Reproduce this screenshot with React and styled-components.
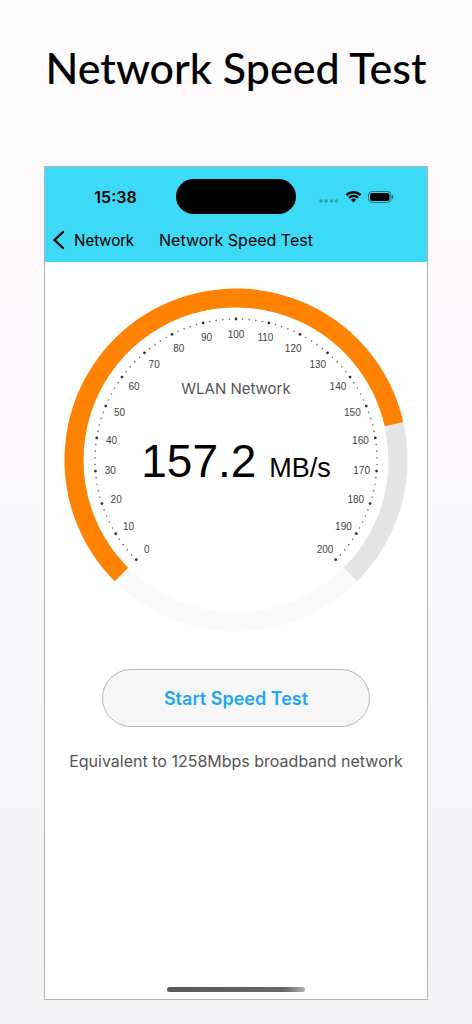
import React from 'react'
import styled, { createGlobalStyle } from 'styled-components';

const MAX_SPEED = 200;
const SWEEP = 270;
const CENTER = 172;
const RING_RADIUS = 162;
const TICK_RADIUS = 141;
const LABEL_RADIUS = 126;

// 0 degrees points up, angles grow clockwise
const polar = (radius, degrees) => {
  const radians = degrees * Math.PI / 180;
  return [CENTER + radius * Math.sin(radians), CENTER - radius * Math.cos(radians)];
};

const angleOf = (speed) => speed / MAX_SPEED * SWEEP - SWEEP / 2;

const arc = (from, to) => {
  const [x1, y1] = polar(RING_RADIUS, from);
  const [x2, y2] = polar(RING_RADIUS, to);
  const large = to - from > 180 ? 1 : 0;
  return `M${ x1 } ${ y1 }A${ RING_RADIUS } ${ RING_RADIUS } 0 ${ large } 1 ${ x2 } ${ y2 }`;
};

const ticks = Array.from({ length: 101 }, (_, i) => i * 2);
const labels = Array.from({ length: 21 }, (_, i) => i * 10);

const Gauge = ({ speed, network }) => (
  <GaugeWrapper>
    <GaugeSvg viewBox="0 0 344 344" aria-hidden="true">
      <Ring d={arc(135, 225)} $color="#fafafa" />
      <Ring d={arc(-135, 135)} $color="#e5e5e5" />
      <Ring d={arc(-135, angleOf(speed))} $color="#ff8200" />
      {
        ticks.map((value) => {
          const [cx, cy] = polar(TICK_RADIUS, angleOf(value));
          const major = value % 10 === 0;
          return <Tick key={value} cx={cx} cy={cy} r={major ? 1.4 : 0.8} $major={major} />;
        })
      }
      {
        labels.map((value) => {
          const [x, y] = polar(LABEL_RADIUS, angleOf(value));
          return <TickLabel key={value} x={x} y={y} dy="4">{value}</TickLabel>;
        })
      }
    </GaugeSvg>
    <Reading>
      <NetworkName>{network}</NetworkName>
      <Speed>{speed} <Unit>MB/s</Unit></Speed>
    </Reading>
  </GaugeWrapper>
);

const WifiIcon = () => (
  <svg width="17" height="12" viewBox="0 0 17 12" fill="#000">
    <path d="M8.5 2.4c2.3 0 4.4.9 6 2.4.1.1.3.1.4 0l1.2-1.2c.1-.1.1-.3 0-.5A11 11 0 0 0 8.5.1 11 11 0 0 0 .9 3.1c-.1.2-.1.4 0 .5l1.2 1.2c.1.1.3.1.4 0a8.7 8.7 0 0 1 6-2.4z" />
    <path d="M8.5 6.2c1.3 0 2.5.5 3.4 1.3.1.1.3.1.5 0l1.2-1.2c.1-.1.1-.3 0-.5a7.4 7.4 0 0 0-10.2 0c-.1.2-.1.4 0 .5l1.2 1.2c.2.1.4.1.5 0 .9-.8 2.1-1.3 3.4-1.3z" />
    <path d="M10.9 9c.1-.1.1-.3 0-.4a3.7 3.7 0 0 0-4.8 0c-.1.1-.1.3 0 .4l2.2 2.2c.1.1.3.1.4 0z" />
  </svg>
);

const BatteryIcon = () => (
  <svg width="26" height="12" viewBox="0 0 26 12">
    <rect x="0.5" y="0.5" width="22.5" height="11" rx="3.5" fill="none" stroke="#000" strokeOpacity="0.45" />
    <rect x="2" y="2" width="19.5" height="8" rx="2.2" fill="#000" />
    <path d="M24 4v4c.9-.4 1.4-1.1 1.4-2S24.9 4.4 24 4z" fill="#000" fillOpacity="0.5" />
  </svg>
);

const SignalIcon = () => (
  <svg width="20" height="4" viewBox="0 0 20 4" fill="#000" fillOpacity="0.25">
    <circle cx="2" cy="2" r="1.8" />
    <circle cx="7" cy="2" r="1.8" />
    <circle cx="12.5" cy="2" r="1.8" />
    <circle cx="17.5" cy="2" r="1.8" />
  </svg>
);

const BackIcon = () => (
  <svg width="12" height="20" viewBox="0 0 12 20" fill="none" stroke="#000" strokeWidth="2.4" strokeLinecap="round" strokeLinejoin="round">
    <path d="M10 2 1.5 10l8.5 8" />
  </svg>
);

export default function App() {
  return (
    <Page>
      <GlobalStyle />
      <Headline>Network Speed Test</Headline>
      <Phone>
        <Header>
          <StatusBar>
            <Time>15:38</Time>
            <Island />
            <StatusIcons>
              <SignalBox><SignalIcon /></SignalBox>
              <WifiIcon />
              <BatteryIcon />
            </StatusIcons>
          </StatusBar>
          <NavBar>
            <BackLink href="#network"><BackIcon />Network</BackLink>
            <NavTitle>Network Speed Test</NavTitle>
          </NavBar>
        </Header>
        <Content>
          <Gauge speed={157.2} network="WLAN Network" />
          <StartButton type="button">Start Speed Test</StartButton>
          <Equivalent>Equivalent to 1258Mbps broadband network</Equivalent>
        </Content>
        <HomeBar />
      </Phone>
    </Page>
  )
}

const GlobalStyle = createGlobalStyle`
  * {
    box-sizing: border-box;
  }
  body {
    margin: 0;
    font-family: Inter, 'Liberation Sans', sans-serif;
    color: #000;
  }
`;

const Page = styled.div`
  display: flex;
  flex-direction: column;
  min-height: 100vh;
  padding: 0 44px 24px;
  background: linear-gradient(#fdfbfc, #fbf9fb 40%, #f2f2f5);
`;

const Headline = styled.h1`
  margin: 0;
  padding: 36px 0 66px;
  font-family: Lato, 'Noto Sans', sans-serif;
  font-size: 43px;
  font-weight: 500;
  line-height: 64px;
  text-align: center;
  white-space: nowrap;
`;

const Phone = styled.main`
  flex: 1;
  display: flex;
  flex-direction: column;
  border: 1px solid #b4b4b6;
  background: #fff;
`;

const Header = styled.header`
  padding-top: 12px;
  background: #3cdaf6;
`;

const StatusBar = styled.div`
  display: grid;
  grid-template-columns: 1fr 120px 1fr;
  align-items: center;
`;

const Time = styled.span`
  padding-left: 10px;
  font-size: 16px;
  font-weight: 600;
  text-align: center;
`;

const Island = styled.div`
  height: 35px;
  border-radius: 18px;
  background: #000;
`;

const StatusIcons = styled.div`
  display: flex;
  align-items: center;
  justify-content: center;
  gap: 6px;
  padding-right: 10px;
`;

const SignalBox = styled.span`
  display: flex;
  align-items: flex-end;
  height: 12px;
`;

const NavBar = styled.nav`
  display: grid;
  grid-template-columns: 1fr auto 1fr;
  align-items: center;
  height: 48px;
  padding: 4px 8px 0;
  font-size: 16px;
`;

const BackLink = styled.a`
  display: flex;
  align-items: center;
  gap: 9px;
  color: #000;
  font-family: Roboto, sans-serif;
  text-decoration: none;
`;

const NavTitle = styled.span`
  white-space: nowrap;
`;

const Content = styled.section`
  flex: 1;
  display: flex;
  flex-direction: column;
  align-items: center;
  padding: 26px 19px 0;
`;

const GaugeWrapper = styled.div`
  position: relative;
  width: 100%;
  max-width: 480px;
`;

const GaugeSvg = styled.svg`
  display: block;
  width: 100%;
`;

const Ring = styled.path`
  fill: none;
  stroke: ${({ $color }) => $color};
  stroke-width: 19px;
`;

const Tick = styled.circle`
  fill: ${({ $major }) => $major ? '#333' : '#666'};
`;

const TickLabel = styled.text`
  font-family: 'Liberation Sans', sans-serif;
  font-size: 10px;
  text-anchor: middle;
  fill: #444;
`;

/* lies over the middle of the dial */
const Reading = styled.div`
  position: absolute;
  inset: 0;
  display: flex;
  flex-direction: column;
  align-items: center;
  justify-content: center;
  gap: 34px;
  padding-bottom: 46px;
`;

const NetworkName = styled.span`
  font-size: 15px;
  line-height: 20px;
  color: #555;
`;

const Speed = styled.strong`
  font-family: 'Liberation Sans', sans-serif;
  font-size: 46px;
  font-weight: 400;
  line-height: 56px;
  white-space: nowrap;
`;

const Unit = styled.small`
  font-size: 27px;
`;

const StartButton = styled.button`
  width: 78%;
  height: 58px;
  margin-top: 37px;
  border: 1px solid #b8b8b8;
  border-radius: 29px;
  background: #f7f7f7;
  color: #1ea5f3;
  font-family: inherit;
  font-size: 18px;
  font-weight: 600;
`;

const Equivalent = styled.p`
  margin: 22px 0 0;
  font-size: 16px;
  line-height: 24px;
  color: #555;
  text-align: center;
  white-space: nowrap;
`;

const HomeBar = styled.div`
  align-self: center;
  width: 36%;
  height: 5px;
  margin-bottom: 7px;
  border-radius: 3px;
  background: linear-gradient(90deg, #585858, #686868 85%, #b0b0b0);
`;
